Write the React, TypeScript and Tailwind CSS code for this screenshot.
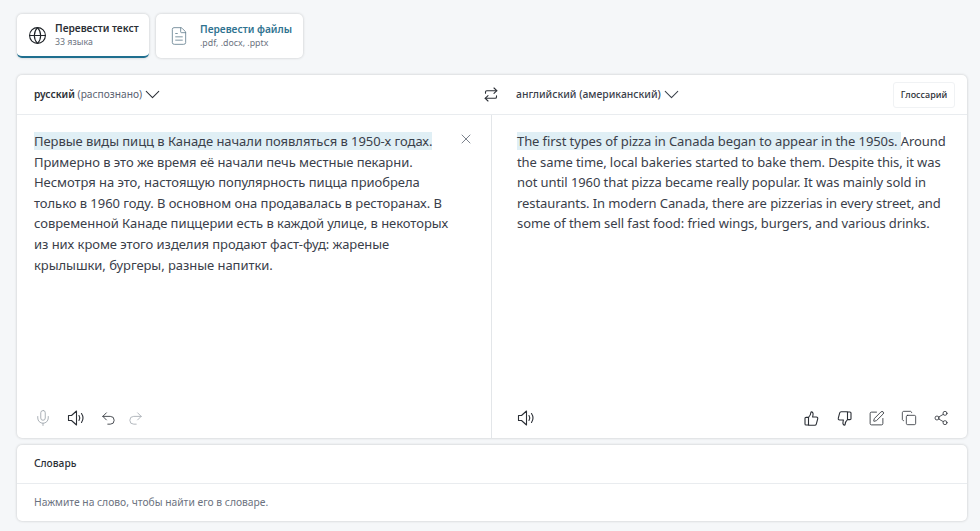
import { Globe, FileText, ChevronDown, X, Mic, Undo2, Redo2, SquarePen, Copy, Share2 } from "lucide-react";

function ModeTab(props: { active?: boolean; title: string; sub: string; width: string; textLeft: string; icon: React.ReactNode }) {
  return (
    <div
      className={`flex h-[44px] items-center rounded-[5px] bg-white shadow-[0_0_3px_rgba(0,0,0,0.2)] ${props.width} ${
        props.active ? "border-b-[2px] border-[#1f6f8f]" : ""
      }`}
    >
      <div className={`flex justify-center ${props.textLeft}`}>{props.icon}</div>
      <div className="flex flex-col">
        <span className={`text-[10.2px] leading-[15px] font-semibold ${props.active ? "text-[#2b2f36]" : "text-[#2f7390]"}`}>
          {props.title}
        </span>
        <span className="text-[8.8px] leading-[13px] text-[#6b7280]">{props.sub}</span>
      </div>
    </div>
  );
}

function Highlight(props: { children: React.ReactNode }) {
  return <span className="bg-[#e0eff5]">{props.children}</span>;
}

function Speaker() {
  return (
    <svg width="18" height="18" viewBox="0 0 18 18" fill="none" stroke="#2b2f36" strokeWidth="1.1" strokeLinejoin="round" strokeLinecap="round">
      <path d="M1.5 6.5h3L9.5 2v14l-5-4.5h-3z" />
      <path d="M12 6.5c1 1.5 1 3.5 0 5" />
      <path d="M14.5 4.5c1.8 2.7 1.8 6.3 0 9" />
    </svg>
  );
}

function SwapArrows() {
  return (
    <svg width="14" height="15" viewBox="0 0 14 15" fill="none" stroke="#2b2f36" strokeWidth="1.1" strokeLinecap="round" strokeLinejoin="round">
      <path d="M1.5 6.2V5c0-.8.5-1.3 1.3-1.3h10" />
      <path d="M10 1l2.8 2.7L10 6.3" />
      <path d="M12.5 8.8V10c0 .8-.5 1.3-1.3 1.3h-10" />
      <path d="M4 8.7l-2.8 2.6L4 14" />
    </svg>
  );
}

function ThumbUp(props: { flip?: boolean }) {
  return (
    <svg width="16" height="17" viewBox="0 0 16 17" fill="none" stroke="#2b2f36" strokeWidth="1.1" strokeLinejoin="round" strokeLinecap="round" className={props.flip ? "rotate-180" : ""}>
      <path d="M1 8.5c0-.6.5-1.1 1.1-1.1H4.500c1.200-.9 2.200-2.600 2.500-5.400 1.500-.4 2.400 1 2 3l-.4 2h3.800c1 0 1.600.9 1.300 1.800l-1.400 5.300c-.2.700-.8 1.200-1.500 1.200H5.500L4.500 15H2.100C1.500 15 1 14.500 1 13.900z" />
      <path d="M4.500 7.500V15" />
    </svg>
  );
}

export default function App() {
  return (
    <div className="h-[531px] w-[980px] overflow-hidden bg-[#f5f7f9] pl-[17px] pr-[13px] pt-[14px] font-['Noto_Sans',sans-serif] text-[#2b2f36]">
      <div className="flex gap-[7px]">
        <ModeTab active title="Перевести текст" sub="33 языка" width="w-[132px]" textLeft="w-[38px] pl-[2px]" icon={<Globe size={19} strokeWidth={1.4} className="text-[#1f2328]" />} />
        <ModeTab title="Перевести файлы" sub=".pdf, .docx, .pptx" width="w-[147px]" textLeft="w-[44px] pl-[2px]" icon={<FileText size={20} strokeWidth={1} className="text-[#64808f]" />} />
      </div>

      <div className="mt-[17px] flex h-[363px] flex-col rounded-[5px] bg-white shadow-[0_0_3px_rgba(0,0,0,0.2)]">
        <div className="flex h-[40px] items-center border-b border-[#e9ecef] pl-[17px] pr-[12px]">
          <div className="flex w-[450px] items-center text-[10.2px]">
            <span>
              <span className="font-semibold">русский</span> <span className="text-[#5a6270]">(распознано)</span>
            </span>
            <ChevronDown size={25} strokeWidth={1} className="-ml-[2px]" />
          </div>
          <SwapArrows />
          <div className="ml-[18px] flex items-center text-[10.4px] font-medium text-[#3a404a]">
            <span>английский (американский)</span>
            <ChevronDown size={25} strokeWidth={1} className="-ml-[2px]" />
          </div>
          <div className="ml-auto flex h-[26px] w-[62px] items-center justify-center rounded-[3px] border border-[#f0f2f4] text-[9px] font-medium">
            Глоссарий
          </div>
        </div>

        <div className="flex min-h-0 flex-1">
          <div className="flex w-[475px] flex-col border-r border-[#e3e6e9] pb-[11px] pl-[17px] pr-[17px] pt-[16px]">
            <div className="flex flex-1 items-start">
              <p className="w-[420px] text-[13px] leading-[20.6px] tracking-[-0.05px] text-[#3a404a]">
                <Highlight>Первые виды пицц в Канаде начали появляться в 1950-х годах. </Highlight>
                Примерно в это же время её начали печь местные пекарни. Несмотря на это, настоящую популярность пицца приобрела только в 1960 году. В основном она продавалась в ресторанах. В современной Канаде пиццерии есть в каждой улице, в некоторых из них кроме этого изделия продают фаст-фуд: жареные крылышки, бургеры, разные напитки.
              </p>
              <X size={16} strokeWidth={1.1} className="ml-auto text-[#4b5563]" />
            </div>
            <div className="flex items-center gap-[15px]">
              <Mic size={18} strokeWidth={1.1} className="text-[#9aa1a9]" />
              <Speaker />
              <Undo2 size={17} strokeWidth={1.2} />
              <Redo2 size={17} strokeWidth={1.2} className="-ml-[5px] text-[#a5abb2]" />
            </div>
          </div>

          <div className="flex flex-1 flex-col pb-[11px] pl-[25px] pr-[16px] pt-[16px]">
            <p className="flex-1 text-[13px] leading-[20.6px] tracking-[-0.09px] text-[#3a404a]">
              <Highlight>The first types of pizza in Canada began to appear in the 1950s. </Highlight>
              Around the same time, local bakeries started to bake them. Despite this, it was not until 1960 that pizza became really popular. It was mainly sold in restaurants. In modern Canada, there are pizzerias in every street, and some of them sell fast food: fried wings, burgers, and various drinks.
            </p>
            <div className="flex items-center">
              <Speaker />
              <div className="ml-auto flex items-center gap-[16px] pr-[2px]">
                <ThumbUp />
                <ThumbUp flip />
                <SquarePen size={17} strokeWidth={1.2} />
                <Copy size={16} strokeWidth={1.2} />
                <Share2 size={16} strokeWidth={1.2} />
              </div>
            </div>
          </div>
        </div>
      </div>

      <div className="mt-[7px] flex h-[76px] flex-col rounded-[5px] bg-white shadow-[0_0_3px_rgba(0,0,0,0.2)]">
        <div className="flex h-[39px] items-center border-b border-[#e9ecef] pl-[17px] text-[10.2px] font-medium">Словарь</div>
        <div className="flex flex-1 items-center pl-[17px] pt-[1px] text-[10.3px] text-[#6b7280]">Нажмите на слово, чтобы найти его в словаре.</div>
      </div>
    </div>
  );
}
